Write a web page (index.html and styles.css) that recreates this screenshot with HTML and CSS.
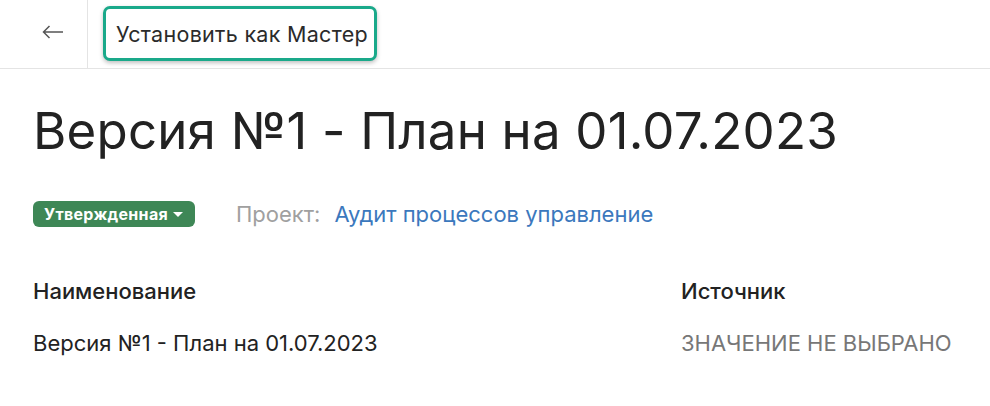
FILE: index.html
```html
<!DOCTYPE html>
<html lang="ru">
<head>
<meta charset="utf-8">
<link rel="stylesheet" href="styles.css">
</head>
<body>
<header class="topbar">
  <div class="back">
    <svg width="22" height="14" viewBox="0 0 22 14"><path d="M21 7H1.5M7.5 1L1.5 7l6 6" fill="none" stroke="#555" stroke-width="1.5"/></svg>
  </div>
  <div class="actions">
    <button class="master-btn">Установить как Мастер</button>
  </div>
</header>
<main class="content">
  <h1 class="title">Версия №1 - План на 01.07.2023</h1>
  <div class="meta">
    <span class="badge">Утвержденная <span class="caret"></span></span>
    <span class="project-label">Проект:</span>
    <a class="project-link" href="#">Аудит процессов управление</a>
  </div>
  <div class="fields">
    <div class="field">
      <div class="field-name">Наименование</div>
      <div class="field-value">Версия №1 - План на 01.07.2023</div>
    </div>
    <div class="field field-right">
      <div class="field-name">Источник</div>
      <div class="field-value empty">ЗНАЧЕНИЕ НЕ ВЫБРАНО</div>
    </div>
  </div>
</main>
</body>
</html>
```
FILE: styles.css
```css
html, body { margin: 0; padding: 0; background: #fff; }
body { font-family: Inter, "Noto Sans", sans-serif; color: #222; }
.topbar { display: flex; height: 68px; border-bottom: 1px solid #e4e4e4; }
.back { width: 88px; box-sizing: border-box; border-right: 1px solid #e4e4e4; display: flex; align-items: center; padding-left: 42px; padding-bottom: 4px; }
.actions { display: flex; align-items: flex-start; padding-left: 15px; padding-top: 6px; }
.master-btn {
  font-family: Inter, "Noto Sans", sans-serif; font-size: 21.5px; color: #2b2b2b;
  background: #fff; border: 3px solid #1aa98a; border-radius: 7px;
  height: 55px; padding: 0 6px 0 10px; box-sizing: border-box;
  box-shadow: 0 2px 4px rgba(0,0,0,0.25);
  letter-spacing: 0.3px;
}
.content { padding: 0 33px; }
.title { font-weight: 400; font-size: 51px; margin: 31px 0 0; line-height: 62px; color: #222; letter-spacing: 0.2px; }
.meta { display: flex; align-items: center; margin-top: 39px; height: 26px; }
.badge { background: #3e8756; color: #fff; font-weight: 700; font-size: 16px; height: 26px; border-radius: 6px; padding: 0 12px 0 11px; display: inline-flex; align-items: center; gap: 5px; box-sizing: border-box; letter-spacing: 0.3px; }
.caret { width: 0; height: 0; border-left: 5px solid transparent; border-right: 5px solid transparent; border-top: 5px solid #fff; margin-top: 1px; }
.project-label { color: #a0a0a0; font-size: 22px; margin-left: 41px; }
.project-link { color: #3b78bd; font-size: 22px; text-decoration: none; margin-left: 14px; }
.fields { display: flex; margin-top: 51px; }
.field { width: 648px; }
.field-right { width: auto; }
.field-name { font-size: 22px; font-weight: 500; color: #222; line-height: 26px; }
.field-value { font-size: 22px; margin-top: 26px; line-height: 26px; color: #222; }
.field-value.empty { color: #777; }
```
